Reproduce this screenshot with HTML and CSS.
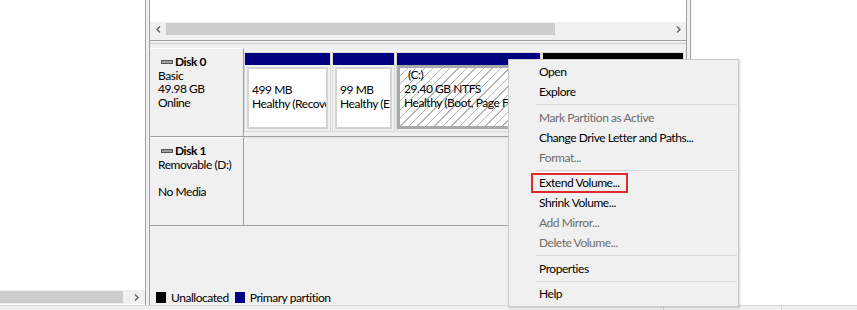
FILE: index.html
```html
<!DOCTYPE html>
<html lang="en">
<head>
    <meta charset="UTF-8">
    <title>Disk Management</title>
    <link rel="stylesheet" href="styles.css">
</head>
<body>
<div class="window">
    <div class="panes">
        <div class="left-pane">
            <div class="tree"></div>
            <div class="hscroll">
                <div class="thumb"></div>
                <span class="arrow"><svg width="5" height="7" viewBox="0 0 5 7"><path d="M1 0.5 L4 3.5 L1 6.5" fill="none" stroke="#606060" stroke-width="1.4"/></svg></span>
            </div>
        </div>
        <div class="gutter"></div>
        <div class="main-frame">
            <div class="main-pane">
                <div class="volume-list"></div>
                <div class="hscroll">
                    <span class="arrow"><svg width="5" height="7" viewBox="0 0 5 7"><path d="M4 0.5 L1 3.5 L4 6.5" fill="none" stroke="#606060" stroke-width="1.4"/></svg></span>
                    <div class="thumb"></div>
                    <div class="track"></div>
                    <span class="arrow"><svg width="5" height="7" viewBox="0 0 5 7"><path d="M1 0.5 L4 3.5 L1 6.5" fill="none" stroke="#606060" stroke-width="1.4"/></svg></span>
                </div>
                <div class="splitter"></div>
                <div class="disk-view">
                    <div class="disk-row">
                        <div class="disk-label">
                            <div class="disk-name"><svg class="disk-icon" width="12" height="4" viewBox="0 0 12 4"><rect x="0.5" y="0.5" width="11" height="3" fill="#a0a0a0" stroke="#555"/></svg>Disk 0</div>
                            <div>Basic</div>
                            <div>49.98 GB</div>
                            <div>Online</div>
                        </div>
                        <div class="partitions">
                            <div class="part p-recovery">
                                <div class="bar"></div>
                                <div class="vol"><div>&nbsp;</div><div>499 MB</div><div>Healthy (Recovery Partition)</div></div>
                            </div>
                            <div class="part p-efi">
                                <div class="bar"></div>
                                <div class="vol"><div>&nbsp;</div><div>99 MB</div><div>Healthy (EFI System Partition)</div></div>
                            </div>
                            <div class="part p-system sel">
                                <div class="bar"></div>
                                <div class="vol"><div class="letter">(C:)</div><div>29.40 GB NTFS</div><div>Healthy (Boot, Page File, Crash Dump, Primary Partition)</div></div>
                            </div>
                            <div class="part p-free">
                                <div class="bar"></div>
                                <div class="vol"><div>&nbsp;</div><div>20.00 GB</div><div>Unallocated</div></div>
                            </div>
                        </div>
                    </div>
                    <div class="disk-row">
                        <div class="disk-label">
                            <div class="disk-name"><svg class="disk-icon" width="12" height="4" viewBox="0 0 12 4"><rect x="0.5" y="0.5" width="11" height="3" fill="#a0a0a0" stroke="#555"/></svg>Disk 1</div>
                            <div>Removable (D:)</div>
                            <div>&nbsp;</div>
                            <div>No Media</div>
                        </div>
                        <div class="no-media"></div>
                    </div>
                    <div class="legend">
                        <span class="swatch black"></span>Unallocated
                        <span class="swatch blue"></span>Primary partition
                    </div>
                </div>
            </div>
        </div>
        <div class="blank"></div>
    </div>
    <div class="statusbar">
        <div class="cell first"></div>
        <div class="cell second"></div>
        <div class="cell"></div>
    </div>

    <!-- context menu for (C:) -->
    <div class="menu">
        <div class="item">Open</div>
        <div class="item">Explore</div>
        <div class="sep"></div>
        <div class="item off">Mark Partition as Active</div>
        <div class="item">Change Drive Letter and Paths...</div>
        <div class="item off">Format...</div>
        <div class="sep"></div>
        <div class="item"><span class="mark">Extend Volume...</span></div>
        <div class="item">Shrink Volume...</div>
        <div class="item off">Add Mirror...</div>
        <div class="item off">Delete Volume...</div>
        <div class="sep"></div>
        <div class="item">Properties</div>
        <div class="sep"></div>
        <div class="item">Help</div>
    </div>
</div>
</body>
</html>
```

FILE: styles.css
```css
* {
    box-sizing: border-box;
}
body {
    margin: 0;
    width: 857px;
    height: 310px;
    overflow: hidden;
    font-family: Lato, "Noto Sans", sans-serif;
    font-size: 12px;
    letter-spacing: -0.45px;
    color: #000;
    background: #fff;
}
.window {
    position: relative;
    height: 310px;
    display: flex;
    flex-direction: column;
}
.panes {
    display: flex;
    height: 305px;
}
.left-pane {
    width: 146px;
    border-right: 1px solid #a0a0a0;
    display: flex;
    flex-direction: column;
    background: #fff;
}
.tree {
    flex: 1;
}
.hscroll {
    display: flex;
    align-items: center;
    height: 14px;
    background: #f0f0f0;
}
.left-pane .hscroll {
    margin-bottom: 1px;
}
.thumb {
    height: 12px;
    background: #cdcdcd;
}
.left-pane .thumb {
    width: 123px;
}
.track {
    flex: 1;
}
.arrow {
    width: 16px;
    height: 14px;
    display: flex;
    align-items: center;
    justify-content: center;
}
.left-pane .arrow {
    margin-left: auto;
    width: 17px;
}
.gutter {
    width: 3px;
    background: #f0f0f0;
}
.main-frame {
    display: flex;
    border-left: 1px solid #a0a0a0;
    border-right: 1px solid #a0a0a0;
    padding-right: 3px;
    background: #f0f0f0;
}
.main-pane {
    width: 537px;
    border-right: 1px solid #a0a0a0;
    display: flex;
    flex-direction: column;
}
.volume-list {
    height: 22px;
    background: #fff;
}
.main-pane .hscroll {
    margin-bottom: 4px;
}
.main-pane .thumb {
    width: 389px;
}
.splitter {
    height: 4px;
    border-top: 1px solid #a0a0a0;
    border-bottom: 1px solid #cfcfcf;
}
.disk-view {
    flex: 1;
    display: flex;
    flex-direction: column;
    padding-top: 4px;
}
.disk-row {
    display: flex;
    height: 89px;
    border-bottom: 1px solid #a0a0a0;
}
.disk-label {
    width: 94px;
    flex-shrink: 0;
    border-top: 1px solid #fff;
    border-right: 1px solid #a0a0a0;
    padding: 6px 0 0 8px;
    line-height: 13.5px;
    white-space: nowrap;
}
.disk-name {
    font-weight: bold;
    display: flex;
    align-items: center;
}
.disk-icon {
    margin: 0 2px 0 3px;
}
.partitions {
    display: flex;
    gap: 1px;
    padding-top: 4px;
}
.part {
    height: 80px;
    border: 1px solid #dadada;
    display: flex;
    flex-direction: column;
}
.p-recovery { width: 87px; }
.p-efi { width: 63px; }
.p-system { width: 145px; }
.p-free { width: 142px; }
.bar {
    height: 12px;
    flex-shrink: 0;
    background: #000080;
}
.p-free .bar {
    background: #000;
}
.vol {
    flex: 1;
    margin: 2px;
    border: 2px solid #d4d4d4;
    background: #fff;
    padding-left: 3px;
    line-height: 14px;
    overflow: hidden;
    white-space: nowrap;
}
.sel .vol {
    margin: 0 2px 2px 0;
    border: 3px solid #a9a9a9;
    padding-left: 4px;
    background: repeating-linear-gradient(135deg, #fff 0 5px, #b4b4b4 5px 6px);
}
.letter {
    padding-left: 4px;
}
.no-media {
    flex: 1;
    border-top: 1px solid #e2e2e2;
}
.legend {
    margin-top: auto;
    height: 16px;
    display: flex;
    align-items: center;
    padding-left: 6px;
    white-space: nowrap;
}
.swatch {
    width: 10px;
    height: 11px;
    margin-right: 5px;
}
.swatch.black {
    background: #000;
}
.swatch.blue {
    background: #000080;
    margin-left: 6px;
}
.blank {
    flex: 1;
    background: #fff;
}
.statusbar {
    height: 5px;
    display: flex;
    border-top: 1px solid #d9d9d9;
    background: #f0f0f0;
}
.cell.first {
    width: 663px;
}
.cell.second {
    width: 119px;
    border-left: 1px solid #d0d0d0;
    border-right: 1px solid #d0d0d0;
}
.menu {
    position: absolute;
    left: 508px;
    top: 59px;
    width: 231px;
    padding: 2px 0;
    background: #f0f0f0;
    border: 1px solid #cccccc;
    box-shadow: 1px 1px 2px rgba(0, 0, 0, 0.18);
}
.item {
    height: 20px;
    line-height: 20px;
    padding-left: 30px;
    white-space: nowrap;
}
.item.off {
    color: #6d6d6d;
}
.sep {
    height: 1px;
    margin: 2px 1px 2.5px 27px;
    background: #d7d7d7;
}
.mark {
    display: inline-block;
    line-height: 16px;
    padding: 0 6px 0 6px;
    margin-left: -8px;
    border: 2px solid #dc2a2e;
}
```
